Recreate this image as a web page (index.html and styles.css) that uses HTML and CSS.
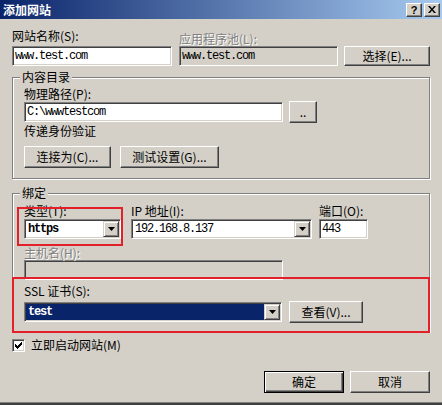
FILE: index.html
```html
<!DOCTYPE html>
<html lang="zh-CN">
<head>
<meta charset="utf-8">
<title>添加网站</title>
<link rel="stylesheet" href="styles.css">
</head>
<body>
<div class="window">
  <div class="titlebar">
    <span class="title">添加网站</span>
    <div class="tbtns">
      <span class="tbtn q">?</span>
      <span class="tbtn">
        <svg width="8" height="7" viewBox="0 0 8 7"><path d="M0 0h2l2 2.5L6 0h2L5 3.5 8 7H6L4 4.5 2 7H0l3-3.5z"/></svg>
      </span>
    </div>
  </div>

  <div class="content">
    <div class="row1">
      <div class="col c1">
        <div class="lbl">网站名称(S):</div>
        <div class="field mono">www.test.com</div>
      </div>
      <div class="col c2">
        <div class="lbl dis">应用程序池(L):</div>
        <div class="field ro mono">www.test.com</div>
      </div>
      <div class="btn w-sel">选择(E)...</div>
    </div>

    <div class="group g1">
      <div class="legend">内容目录</div>
      <div class="lbl mt3">物理路径(P):</div>
      <div class="path-row">
        <div class="field mono w-path">C:\wwwtestcom</div>
        <div class="btn w-dots">..</div>
      </div>
      <div class="lbl mt1">传递身份验证</div>
      <div class="btn-row">
        <div class="btn w-conn">连接为(C)...</div>
        <div class="btn w-test">测试设置(G)...</div>
      </div>
    </div>

    <div class="group g2">
      <div class="legend">绑定</div>
      <div class="bind-row">
        <div class="col w-type">
          <div class="lbl">类型(T):</div>
          <div class="combo">
            <span class="val mono b">https</span>
            <span class="drop"><svg width="7" height="4" viewBox="0 0 7 4"><path d="M0 0h7L3.5 4z"/></svg></span>
          </div>
        </div>
        <div class="col w-ip">
          <div class="lbl">IP 地址(I):</div>
          <div class="combo">
            <span class="val mono">192.168.8.137</span>
            <span class="drop"><svg width="7" height="4" viewBox="0 0 7 4"><path d="M0 0h7L3.5 4z"/></svg></span>
          </div>
        </div>
        <div class="col w-port">
          <div class="lbl">端口(O):</div>
          <div class="field mono">443</div>
        </div>
      </div>
      <div class="lbl dis mt7">主机名(H):</div>
      <div class="field ro w-path"></div>
      <div class="lbl mt4">SSL 证书(S):</div>
      <div class="ssl-row">
        <div class="combo w-ssl">
          <span class="val mono b hl">test</span>
          <span class="drop"><svg width="7" height="4" viewBox="0 0 7 4"><path d="M0 0h7L3.5 4z"/></svg></span>
        </div>
        <div class="btn w-view">查看(V)...</div>
      </div>
    </div>

    <div class="check-row">
      <span class="checkbox">
        <svg width="9" height="9" viewBox="0 0 9 9"><path d="M1 3h1v1h1v1h1V4h1V3h1V2h1V1h1v3h-1v1H6v1H5v1H4v1H3V7H2V6H1z"/></svg>
      </span>
      <span class="check-lbl">立即启动网站(M)</span>
    </div>

    <div class="footer">
      <div class="btn def w-ok">确定</div>
      <div class="btn w-ok">取消</div>
    </div>
  </div>

  <div class="mark mark-type"></div>
  <div class="mark mark-ssl"></div>
</div>
</body>
</html>
```

FILE: styles.css
```css
* { box-sizing: border-box; }

body {
  margin: 0;
  font-family: "Noto Sans CJK SC", "Liberation Sans", sans-serif;
  font-size: 12px;
  line-height: 14px;
  color: #000;
  background: #d4d0c8;
}

.window {
  position: relative;
  width: 442px;
  height: 405px;
  background: #d4d0c8;
  overflow: hidden;
  border-bottom: 2px solid #404040;
  box-shadow: inset 0 -1px 0 #808080;
}

/* title bar */
.titlebar {
  height: 19px;
  display: flex;
  align-items: center;
  justify-content: space-between;
  padding: 0 2px 0 3px;
  background: linear-gradient(to right, #0a246a, #a6caf0);
}
.title {
  color: #fff;
  font-weight: bold;
  font-size: 12px;
  line-height: 14px;
}
.tbtns { display: flex; gap: 2px; }
.tbtn {
  width: 16px;
  height: 14px;
  display: flex;
  align-items: center;
  justify-content: center;
  background: #d4d0c8;
  border: 1px solid;
  border-color: #fff #404040 #404040 #fff;
  box-shadow: inset -1px -1px 0 #808080;
}
.tbtn.q {
  font-family: "Liberation Sans", sans-serif;
  font-weight: bold;
  font-size: 11px;
  line-height: 12px;
}

/* content */
.content { padding: 10px 12px 0 12px; }

.lbl { height: 14px; line-height: 14px; white-space: nowrap; }
.lbl.dis { color: #808080; text-shadow: 1px 1px 0 #fff; }
.mt1 { margin-top: 1px; }
.mt3 { margin-top: 3px; }
.mt4 { margin-top: 4px; }
.mt7 { margin-top: 7px; }

.mono {
  font-family: "Liberation Mono", "DejaVu Sans Mono", monospace;
  font-size: 12px;
  letter-spacing: -1.2px;
}
.b { font-weight: bold; }

.field {
  height: 20px;
  line-height: 16px;
  background: #fff;
  border: 1px solid;
  border-color: #808080 #fff #fff #808080;
  box-shadow: inset 1px 1px 0 #404040, inset -1px -1px 0 #d4d0c8;
  padding: 1px 2px;
  white-space: nowrap;
  overflow: hidden;
}
.field.ro { background: #d4d0c8; }

.btn {
  height: 22px;
  display: flex;
  align-items: center;
  justify-content: center;
  background: #d4d0c8;
  border: 1px solid;
  border-color: #fff #404040 #404040 #fff;
  box-shadow: inset -1px -1px 0 #808080;
  white-space: nowrap;
  line-height: 14px;
}
.btn.def {
  border-color: #000;
  box-shadow: inset 1px 1px 0 #fff, inset -1px -1px 0 #404040, inset -2px -2px 0 #808080;
}

/* row 1 */
.row1 { display: flex; align-items: flex-end; }
.col { display: flex; flex-direction: column; }
.lbl + .field, .lbl + .combo { margin-top: 3px; }
.c1 { width: 160px; }
.c2 { width: 159px; margin-left: 7px; }
.w-sel { width: 86px; margin-left: 6px; height: 20px; }

/* group boxes */
.group {
  border: 1px solid #808080;
  box-shadow: inset 1px 1px 0 #fff, 1px 1px 0 #fff;
  padding: 0 11px;
}
.legend {
  width: max-content;
  margin: -8px 0 0 -4px;
  padding: 0 2px;
  height: 14px;
  background: #d4d0c8;
}
.g1 { margin-top: 11px; padding-bottom: 10px; }
.g2 { margin-top: 14px; padding-bottom: 8px; }

.path-row { display: flex; align-items: center; gap: 6px; margin-top: 0; height: 22px; }
.w-path { width: 259px; }
.w-dots { width: 28px; }
.btn-row { display: flex; gap: 9px; margin-top: 8px; }
.w-conn { width: 87px; }
.w-test { width: 99px; }

/* binding */
.bind-row { display: flex; margin-top: 4px; }
.bind-row .lbl + .field, .bind-row .lbl + .combo { margin-top: 1px; }
.w-type { width: 97px; }
.w-ip { width: 181px; margin-left: 10px; }
.w-port { width: 49px; margin-left: 7px; }
.lbl.dis + .field { margin-top: 0; }

.combo {
  height: 20px;
  display: flex;
  background: #fff;
  border: 1px solid;
  border-color: #808080 #fff #fff #808080;
  box-shadow: inset 1px 1px 0 #404040, inset -1px -1px 0 #d4d0c8;
  padding: 1px;
}
.combo .val {
  flex: 1;
  line-height: 16px;
  padding-left: 2px;
  white-space: nowrap;
}
.combo .val.hl { background: #0a246a; color: #fff; }
.drop {
  width: 16px;
  display: flex;
  align-items: center;
  justify-content: center;
  background: #d4d0c8;
  border: 1px solid;
  border-color: #d4d0c8 #404040 #404040 #d4d0c8;
  box-shadow: inset 1px 1px 0 #fff, inset -1px -1px 0 #808080;
}

.ssl-row { display: flex; align-items: center; gap: 7px; margin-top: 3px; height: 22px; }
.w-ssl { width: 258px; }
.w-view { width: 74px; }

/* checkbox */
.check-row { display: flex; align-items: center; gap: 6px; margin-top: 6px; height: 14px; }
.checkbox {
  width: 13px;
  height: 13px;
  display: flex;
  align-items: center;
  justify-content: center;
  background: #fff;
  border: 1px solid;
  border-color: #808080 #fff #fff #808080;
  box-shadow: inset 1px 1px 0 #404040, inset -1px -1px 0 #d4d0c8;
}
.checkbox svg { display: block; }

/* footer */
.footer { display: flex; justify-content: flex-end; gap: 6px; margin-top: 19px; }
.w-ok { width: 80px; }

/* red annotation marks */
.mark { position: absolute; border: 2px solid #e3202a; }
.mark-type { left: 17px; top: 207px; width: 106px; height: 39px; }
.mark-ssl { left: 12px; top: 277px; width: 418px; height: 56px; }
```
